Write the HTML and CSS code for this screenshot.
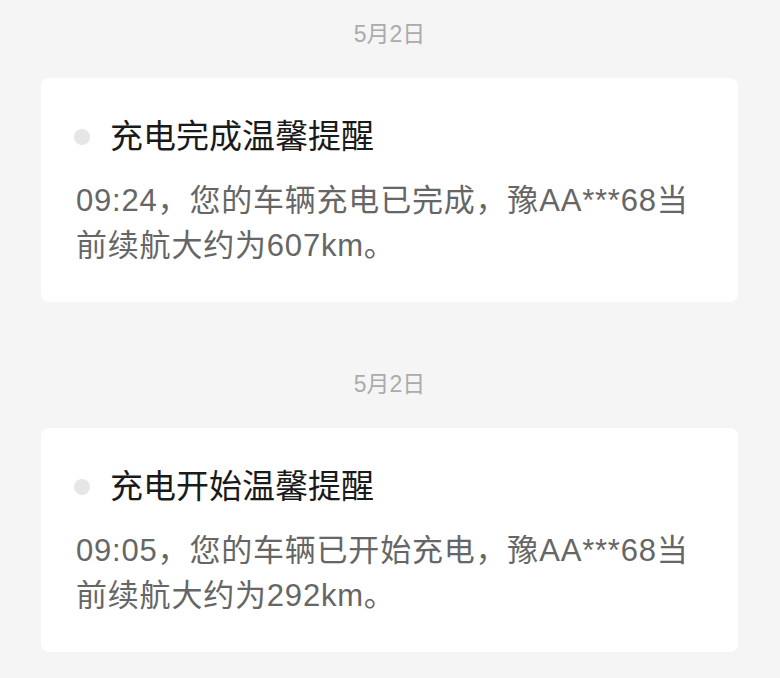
FILE: index.html
```html
<!DOCTYPE html>
<html>
<head>
  <meta charset="UTF-8">
  <title>消息通知</title>
  <link rel="stylesheet" href="styles.css">
</head>
<body>
  <div class="list">
    <div class="group">
      <div class="date">5月2日</div>
      <div class="card">
        <div class="title-row">
          <span class="dot"></span>
          <span class="title">充电完成温馨提醒</span>
        </div>
        <p class="content">09:24，您的车辆充电已完成，豫AA***68当前续航大约为607km。</p>
      </div>
    </div>
    <div class="group">
      <div class="date">5月2日</div>
      <div class="card">
        <div class="title-row">
          <span class="dot"></span>
          <span class="title">充电开始温馨提醒</span>
        </div>
        <p class="content">09:05，您的车辆已开始充电，豫AA***68当前续航大约为292km。</p>
      </div>
    </div>
  </div>
</body>
</html>
```

FILE: styles.css
```css
body {
  margin: 0;
  background-color: #f5f5f5;
  font-family: "Liberation Sans", "Noto Sans CJK SC", sans-serif;
}
.list {
  padding: 19px 42px 0 41px;
}
.group {
  margin-bottom: 67px;
}
.date {
  text-align: center;
  font-size: 23px;
  line-height: 30px;
  color: #ababab;
  margin-bottom: 29px;
}
.card {
  background-color: #fff;
  border-radius: 8px;
  padding: 37px 35px 34px 33px;
}
.title-row {
  display: flex;
  align-items: center;
  height: 44px;
}
.dot {
  width: 16px;
  height: 16px;
  border-radius: 50%;
  background-color: #e6e6e6;
  margin-right: 20px;
  flex-shrink: 0;
}
.title {
  font-size: 33px;
  line-height: 38px;
  color: #1a1a1a;
}
.content {
  margin: 19px 0 0 2px;
  font-size: 31px;
  line-height: 45px;
  letter-spacing: 0.8px;
  color: #666;
}
```
